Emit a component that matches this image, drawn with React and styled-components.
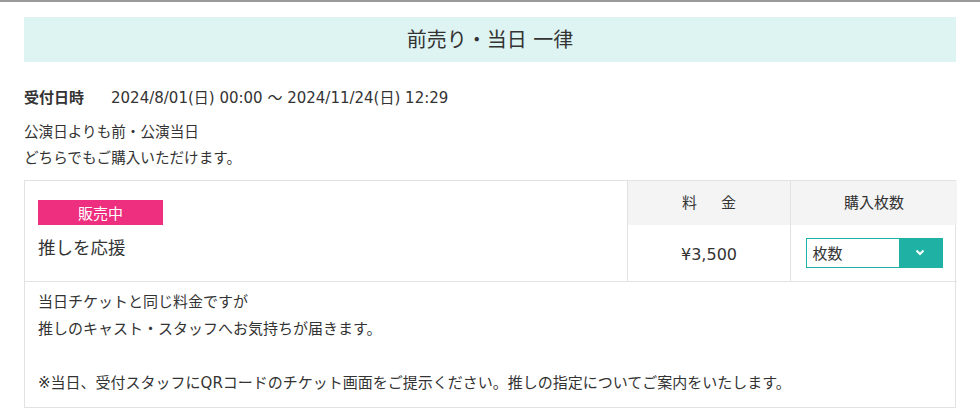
import React from 'react';
import styled, { createGlobalStyle } from 'styled-components';

const GlobalStyle = createGlobalStyle`
    body {
        margin: 0;
        background: #fff;
        font-family: "DejaVu Sans", "Noto Sans CJK JP", sans-serif;
        color: #333;
    }
`

const Page = styled.div`
    border-top: 2px solid #9a9a9a;
    padding: 15px 24px 0;
`

const Band = styled.div`
    height: 45px;
    background-color: #ddf4f2;
    display: flex;
    justify-content: center;
    align-items: center;
    font-size: 20px;
    padding-bottom: 3px;
    box-sizing: border-box;
    color: #333;
`

const Reception = styled.div`
    display: flex;
    align-items: center;
    gap: 27px;
    margin-top: 25px;
    font-size: 15px;
    line-height: 22px;
`

const Label = styled.span`
    font-weight: 700;
`

const Lead = styled.p`
    margin: 10px 0 0;
    font-size: 14.6px;
    line-height: 26px;
`

const Table = styled.div`
    margin-top: 9px;
    display: grid;
    grid-template-columns: 603px 163px 166px;
    grid-template-rows: 44px 57px auto;
    border: 1px solid #e2e2e2;
`

const NameCell = styled.div`
    grid-row: 1 / span 2;
    padding: 19px 13px 0;
    border-right: 1px solid #e2e2e2;
    border-bottom: 1px solid #e2e2e2;
`

const Badge = styled.div`
    width: 125px;
    height: 25px;
    background-color: #ee2e7f;
    color: #fff;
    font-size: 15px;
    display: flex;
    justify-content: center;
    align-items: center;
`

const Name = styled.div`
    margin-top: 9px;
    font-size: 17.5px;
    line-height: 28px;
`

const HeadCell = styled.div`
    background-color: #f4f4f4;
    display: flex;
    justify-content: center;
    align-items: center;
    font-size: 15px;
    padding-bottom: 3px;
    border-right: ${p => (p.last ? 'none' : '1px solid #e2e2e2')};
`

const Spaced = styled.span`
    letter-spacing: 24px;
    padding-left: 24px;
`

const BodyCell = styled.div`
    display: flex;
    justify-content: center;
    align-items: center;
    font-size: 16px;
    padding-top: 2px;
    border-bottom: 1px solid #e2e2e2;
    border-right: ${p => (p.last ? 'none' : '1px solid #e2e2e2')};
`

const Select = styled.div`
    width: 137px;
    height: 30px;
    box-sizing: border-box;
    border: 1px solid #20b1a5;
    display: flex;
    align-items: stretch;
    margin-top: -3px;
`

const SelectText = styled.span`
    flex: 1;
    display: flex;
    align-items: center;
    padding-left: 6px;
    font-size: 15px;
`

const SelectButton = styled.span`
    width: 43px;
    background-color: #20b1a5;
    display: flex;
    justify-content: center;
    align-items: center;
`

const Note = styled.div`
    grid-column: 1 / span 3;
    padding: 7px 13px 10px;
    font-size: 15px;
    line-height: 27px;
`

const App = () => {
    return (
        <>
            <GlobalStyle />
            <Page>
                <Band>前売り・当日 一律</Band>
                <Reception>
                    <Label>受付日時</Label>
                    <span>2024/8/01(日) 00:00 ～ 2024/11/24(日) 12:29</span>
                </Reception>
                <Lead>
                    公演日よりも前・公演当日<br />
                    どちらでもご購入いただけます。
                </Lead>
                <Table>
                    <NameCell>
                        <Badge>販売中</Badge>
                        <Name>推しを応援</Name>
                    </NameCell>
                    <HeadCell><Spaced>料金</Spaced></HeadCell>
                    <HeadCell last>購入枚数</HeadCell>
                    <BodyCell>¥3,500</BodyCell>
                    <BodyCell last>
                        <Select>
                            <SelectText>枚数</SelectText>
                            <SelectButton>
                                <svg width="10" height="7" viewBox="0 0 10 7">
                                    <path d="M1.5 1.5 L5 5 L8.5 1.5" fill="none" stroke="#fff" strokeWidth="2" />
                                </svg>
                            </SelectButton>
                        </Select>
                    </BodyCell>
                    <Note>
                        当日チケットと同じ料金ですが<br />
                        推しのキャスト・スタッフへお気持ちが届きます。<br />
                        <br />
                        ※当日、受付スタッフにQRコードのチケット画面をご提示ください。推しの指定についてご案内をいたします。
                    </Note>
                </Table>
            </Page>
        </>
    );
};

export default App;
